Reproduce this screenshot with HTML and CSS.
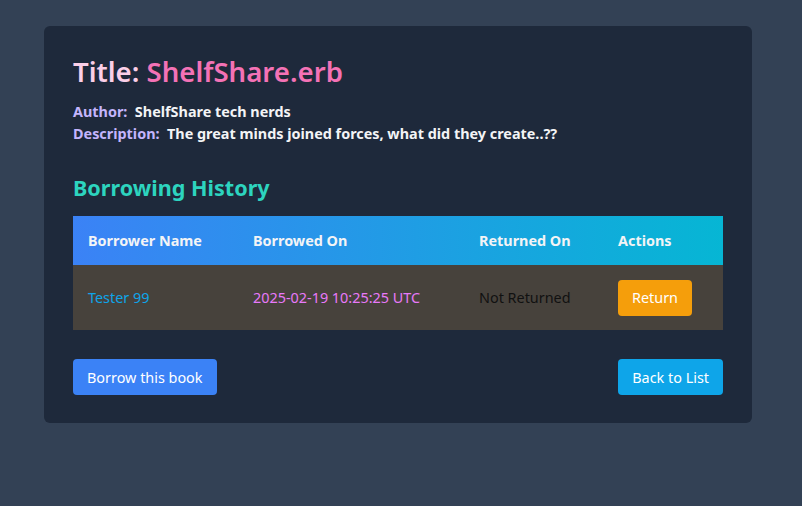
FILE: index.html
```html
<!DOCTYPE html>
<html>
<head>
<meta charset="utf-8">
<link rel="stylesheet" href="styles.css">
</head>
<body>
<div class="card">
  <h1 class="title"><span class="title-label">Title:</span> <span class="title-value">ShelfShare.erb</span></h1>
  <p class="meta"><span class="label">Author:</span>&nbsp; ShelfShare tech nerds</p>
  <p class="meta"><span class="label">Description:</span>&nbsp; The great minds joined forces, what did they create..??</p>
  <h2 class="section">Borrowing History</h2>
  <table class="history">
    <thead>
      <tr>
        <th class="c1">Borrower Name</th>
        <th class="c2">Borrowed On</th>
        <th class="c3">Returned On</th>
        <th class="c4">Actions</th>
      </tr>
    </thead>
    <tbody>
      <tr>
        <td class="name">Tester 99</td>
        <td class="date">2025-02-19 10:25:25 UTC</td>
        <td class="status">Not Returned</td>
        <td><button class="btn btn-return">Return</button></td>
      </tr>
    </tbody>
  </table>
  <div class="actions">
    <button class="btn btn-borrow">Borrow this book</button>
    <button class="btn btn-back">Back to List</button>
  </div>
</div>
</body>
</html>
```
FILE: styles.css
```css
html, body {
  margin: 0;
  padding: 0;
}
body {
  background: #334155;
  font-family: "Noto Sans", "Open Sans", sans-serif;
  color: #e5e7eb;
  padding: 26px 50px 0 44px;
  height: 506px;
  box-sizing: border-box;
}
.card {
  background: #1e293b;
  border-radius: 6px;
  padding: 27px 29px 28px 29px;
}
.title {
  margin: 0 0 12px 0;
  font-size: 27.6px;
  font-weight: 600;
  line-height: 36px;
}
.title-label { color: #fbcfe8; }
.title-value { color: #f472b6; }
.meta {
  margin: 0;
  font-size: 14.4px;
  font-weight: 700;
  line-height: 22px;
  color: #f3f4f6;
}
.label { color: #c4b5fd; }
.section {
  margin: 28px 0 14px 0;
  font-size: 21.6px;
  font-weight: 700;
  line-height: 29px;
  color: #2dd4bf;
}
.history {
  width: 100%;
  border-collapse: collapse;
  font-size: 14.4px;
}
.history thead tr {
  background: linear-gradient(90deg, #3b82f6, #06b6d4);
}
.history th {
  text-align: left;
  font-weight: 700;
  color: #f3f4f6;
  height: 49px;
  padding: 0 15px;
}
.history td {
  background: #47423c;
  height: 65px;
  padding: 0 15px;
}
.c1 { width: 135px; }
.c2 { width: 196px; }
.c3 { width: 109px; }
.name { color: #0ea5e9; }
.date { color: #e879f9; }
.status { color: #111111; }
.btn {
  font-family: inherit;
  font-size: 14.4px;
  border: none;
  border-radius: 4px;
  color: #ffffff;
  padding: 0 14px;
  height: 36px;
  cursor: pointer;
}
.btn-return { background: #f59e0b; }
.btn-borrow { background: #3b82f6; }
.btn-back { background: #0ea5e9; }
.actions {
  display: flex;
  justify-content: space-between;
  margin-top: 29px;
}
```
